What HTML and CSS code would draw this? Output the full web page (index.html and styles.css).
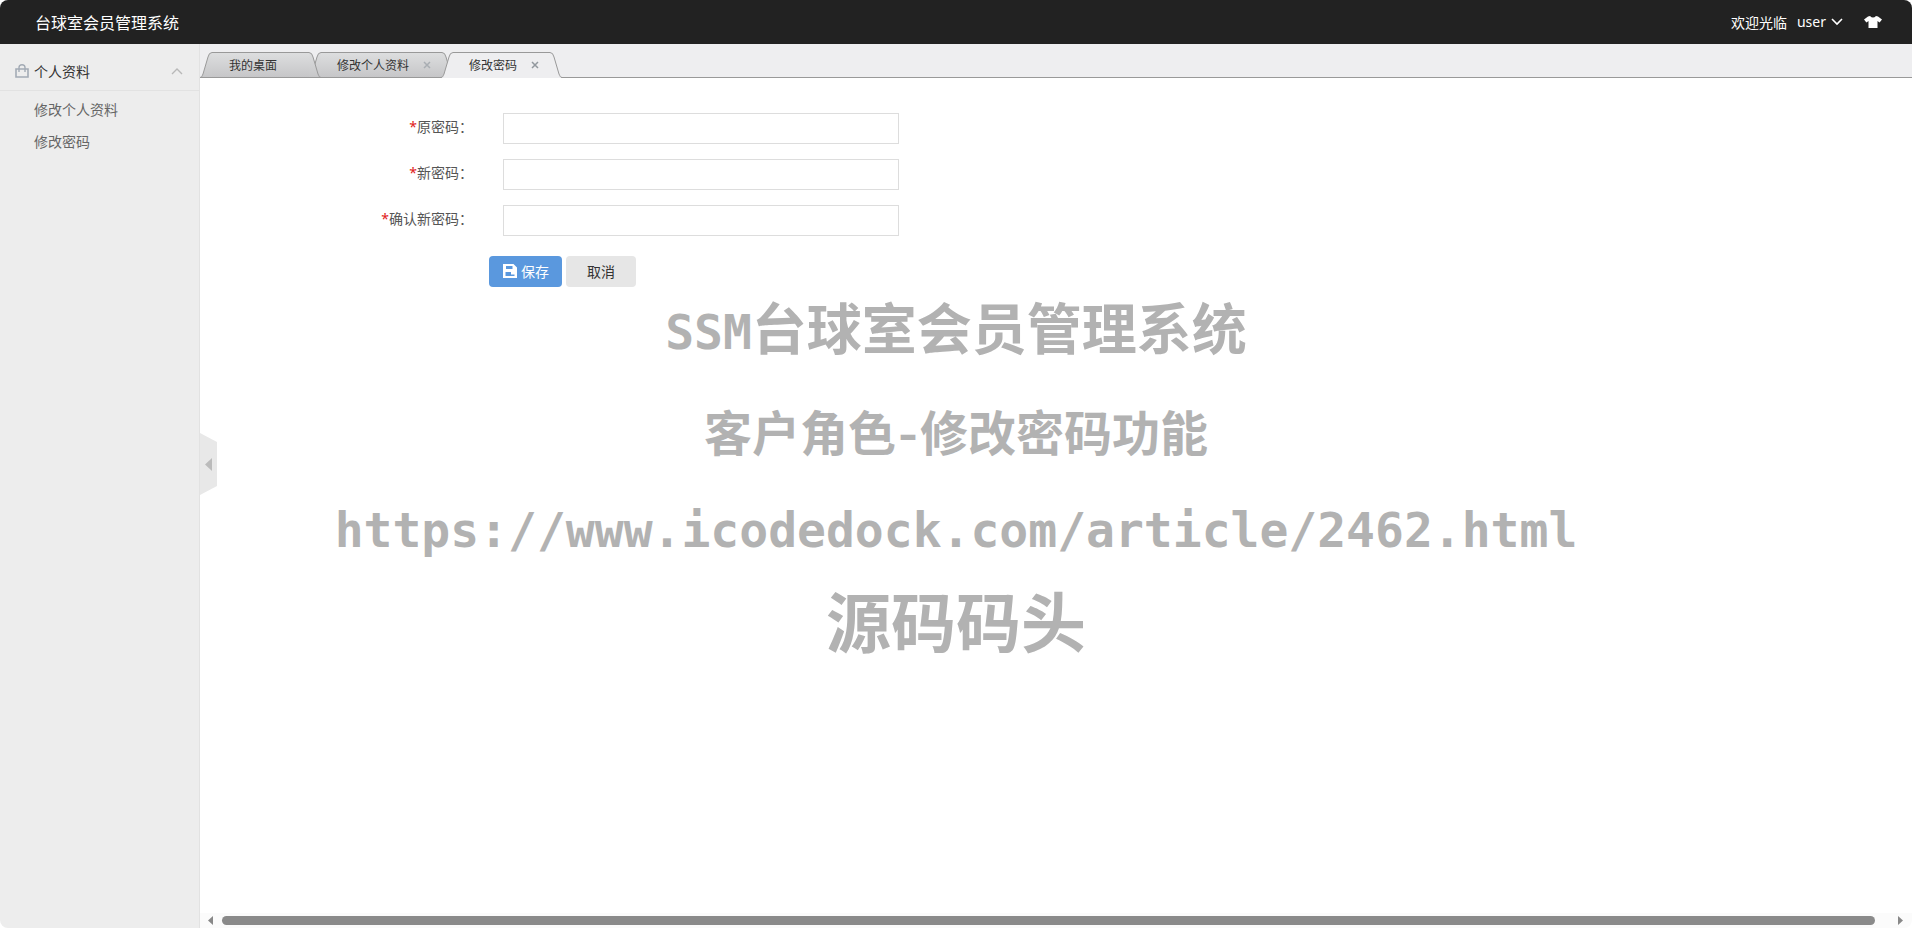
FILE: index.html
```
<!DOCTYPE html>
<html lang="zh-CN">
  <head>
    <meta charset="UTF-8" />
    <meta name="viewport" content="width=device-width, initial-scale=1.0" />
    <title>台球室会员管理系统</title>
    <link rel="stylesheet" href="styles.css" />
  </head>
  <body>
    <div class="window">
      <header class="navbar">
        <a class="logo" href="#">台球室会员管理系统</a>
        <div class="userbar">
          <span>欢迎光临</span>
          <button type="button" class="user">
            user
            <svg width="12" height="8" viewBox="0 0 12 8"><path d="M1 1l5 5 5-5" fill="none" stroke="#fff" stroke-width="1.6" /></svg>
          </button>
          <button type="button" class="skin" aria-label="换肤">
            <svg width="18" height="12" viewBox="0 0 18 12"><path d="M6 0Q9 3 12 0L14 .6 18 3.6 15.6 6.4 13.5 5V12H4.500V5L2.400 6.400 0 3.600 4 .600z" fill="#fff" /></svg>
          </button>
        </div>
      </header>

      <div class="body">
        <aside class="sidebar">
          <button type="button" class="menu-title">
            <svg width="14" height="14" viewBox="0 0 14 14" fill="none" stroke="#a3abb5">
              <path d="M1 5h12v8H1z" stroke-width="1.600" />
              <path d="M4 8V3.500Q4 .700 7 .700T10 3.500V8" stroke-width="1.400" />
            </svg>
            <span>个人资料</span>
            <svg class="arrow" width="12" height="7" viewBox="0 0 12 7"><path d="M1 6l5-5 5 5" fill="none" stroke="#b8b8b8" stroke-width="1.400" /></svg>
          </button>
          <nav class="menu">
            <a href="#">修改个人资料</a>
            <a href="#">修改密码</a>
          </nav>
        </aside>

        <main class="content">
          <button type="button" class="fold" aria-label="收起菜单">
            <svg width="17" height="62" viewBox="0 0 17 62">
              <path d="M0 0L17 9V53L0 62z" fill="#e8e8e8" />
              <path d="M12 25V38L5 31.500z" fill="#bbb" />
            </svg>
          </button>

          <div class="tabs">
            <div class="tab tab-first">
              <svg class="cap" viewBox="0 0 12 26">
                <defs>
                  <linearGradient id="tabFill" gradientUnits="userSpaceOnUse" x1="0" y1="0" x2="0" y2="26">
                    <stop offset="0" stop-color="#dddedf" />
                    <stop offset="1" stop-color="#c6c6c8" />
                  </linearGradient>
                </defs>
                <path class="fill" d="M0 26C2 25 2 24 3 22L8 5Q9 .5 12 .5V26z" /><path class="edge" d="M12 25.500H0C2 25 2 24 3 22L8 5Q9 .5 12 .5" />
              </svg>
              <div class="mid"><a href="#">我的桌面</a></div>
              <svg class="cap" viewBox="0 0 12 26"><path class="fill" d="M12 26C10 25 10 24 9 22L4 5Q3 .5 0 .5V26z" /><path class="edge" d="M0 25.500H12C10 25 10 24 9 22L4 5Q3 .5 0 .5" /></svg>
            </div>
            <div class="tab">
              <svg class="cap" viewBox="0 0 12 26"><path class="fill" d="M0 26C2 25 2 24 3 22L8 5Q9 .5 12 .5V26z" /><path class="edge" d="M12 25.500H0C2 25 2 24 3 22L8 5Q9 .5 12 .5" /></svg>
              <div class="mid">
                <a href="#">修改个人资料</a>
                <button type="button" class="close" aria-label="关闭"><svg width="8" height="8" viewBox="0 0 8 8"><path d="M1 1l6 6M7 1L1 7" /></svg></button>
              </div>
              <svg class="cap" viewBox="0 0 12 26"><path class="fill" d="M12 26C10 25 10 24 9 22L4 5Q3 .5 0 .5V26z" /><path class="edge" d="M0 25.500H12C10 25 10 24 9 22L4 5Q3 .5 0 .5" /></svg>
            </div>
            <div class="tab active">
              <svg class="cap" viewBox="0 0 12 26"><path class="fill" d="M0 26C2 25 2 24 3 22L8 5Q9 .5 12 .5V26z" /><path class="edge" d="M0 25.500C2 25 2 24 3 22L8 5Q9 .5 12 .5" /></svg>
              <div class="mid">
                <a href="#">修改密码</a>
                <button type="button" class="close" aria-label="关闭"><svg width="8" height="8" viewBox="0 0 8 8"><path d="M1 1l6 6M7 1L1 7" /></svg></button>
              </div>
              <svg class="cap" viewBox="0 0 12 26"><path class="fill" d="M12 26C10 25 10 24 9 22L4 5Q3 .5 0 .5V26z" /><path class="edge" d="M12 25.500C10 25 10 24 9 22L4 5Q3 .5 0 .5" /></svg>
            </div>
          </div>

          <form class="form" action="#">
            <div class="row">
              <label for="oldPwd"><span class="red">*</span>原密码：</label>
              <div class="field"><input type="password" id="oldPwd" name="oldPwd" /></div>
            </div>
            <div class="row">
              <label for="newPwd"><span class="red">*</span>新密码：</label>
              <div class="field"><input type="password" id="newPwd" name="newPwd" /></div>
            </div>
            <div class="row">
              <label for="newPwd2"><span class="red">*</span>确认新密码：</label>
              <div class="field"><input type="password" id="newPwd2" name="newPwd2" /></div>
            </div>
            <div class="row">
              <div class="buttons">
                <button type="submit" class="btn btn-primary">
                  <svg width="14" height="14" viewBox="0 0 14 14"><path fill="#fff" fill-rule="evenodd" d="M0 0H10.500L14 3.500V14H0zM3 2V5H9.500V2zM2.500 8V12H11.500V10.500H8V8z" /></svg>
                  保存
                </button>
                <button type="reset" class="btn">取消</button>
              </div>
            </div>
          </form>

          <!-- bottom scroll bar -->
          <div class="scrollbar">
            <svg width="5" height="9" viewBox="0 0 5 9"><path d="M5 0V9L0 4.500z" fill="#888" /></svg>
            <div class="thumb"></div>
            <svg width="5" height="9" viewBox="0 0 5 9"><path d="M0 0V9L5 4.500z" fill="#888" /></svg>
          </div>
        </main>
      </div>

      <div class="watermark">
        <p class="mark-title"><span class="latin">SSM</span>台球室会员管理系统</p>
        <p class="mark-sub">客户角色-修改密码功能</p>
        <p class="mark-url latin">https://www.icodedock.com/article/2462.html</p>
        <p class="mark-name">源码码头</p>
      </div>
    </div>
  </body>
</html>
```

FILE: styles.css
```
* {
  box-sizing: border-box;
}

body {
  margin: 0;
  background: #fff;
  font-family: "Noto Sans", "Noto Sans CJK SC", sans-serif;
  font-size: 14px;
  color: #333;
}

a {
  color: inherit;
  text-decoration: none;
}

button {
  padding: 0;
  border: 0;
  background: none;
  font: inherit;
  color: inherit;
  cursor: pointer;
}

svg {
  display: block;
  flex: none;
}

.window {
  position: relative;
  display: flex;
  flex-direction: column;
  min-height: 100vh;
  border-radius: 8px;
  overflow: hidden;
}

/* top bar */
.navbar {
  display: flex;
  align-items: center;
  justify-content: space-between;
  height: 44px;
  padding: 0 30px 1px 35px;
  background: #222;
  color: #fff;
}

.logo {
  font-size: 16px;
}

.userbar {
  display: flex;
  align-items: center;
}

.user {
  display: flex;
  align-items: center;
  gap: 5px;
  margin: 0 21px 0 10px;
}

.body {
  display: flex;
  flex: 1;
}

/* left menu */
.sidebar {
  flex: none;
  width: 200px;
  background: #ededed;
  border-right: 1px solid #e2e2e2;
}

.menu-title {
  display: flex;
  align-items: center;
  gap: 5px;
  width: 100%;
  height: 47px;
  padding: 8px 16px 0 15px;
  border-bottom: 1px solid #e2e2e2;
}

.menu-title .arrow {
  margin-left: auto;
}

.menu {
  display: flex;
  flex-direction: column;
  padding-top: 3px;
  color: #666;
}

.menu a {
  padding-left: 34px;
  line-height: 32px;
}

/* content */
.content {
  position: relative;
  display: flex;
  flex: 1;
  flex-direction: column;
  min-width: 0;
}

.fold {
  position: absolute;
  left: 0;
  top: 389px;
}

.tabs {
  display: flex;
  align-items: flex-end;
  height: 34px;
  background: #eeeef0;
  box-shadow: inset 0 -1px #999;
}

.tab {
  display: flex;
  height: 26px;
  margin-left: -12px;
  font-size: 12px;
}

.tab-first {
  position: relative;
  z-index: 1;
  margin-left: 0;
}

.tab.active {
  position: relative;
  z-index: 2;
  margin-left: -13px;
}

.cap {
  width: 12px;
  height: 26px;
}

.cap .fill {
  fill: url(#tabFill);
}

.cap .edge {
  fill: none;
  stroke: #999;
}

.mid {
  display: flex;
  align-items: center;
  gap: 14px;
  padding: 0 11px 0 16px;
  border-top: 1px solid #999;
  border-bottom: 1px solid #999;
  background: linear-gradient(#dddedf, #c6c6c8);
}

.tab-first .mid {
  padding: 0 32px 0 17px;
}

.active .mid {
  border-bottom-color: #eeeef0;
  background: #eeeef0;
}

.active .fill {
  fill: #eeeef0;
}

.close path {
  fill: none;
  stroke: #a9aeb3;
  stroke-width: 1.5;
}

.active .close path {
  stroke: #92989e;
}

/* password form */
.form {
  flex: 1;
  padding-top: 35px;
}

.row {
  display: grid;
  grid-template-columns: 16% 25%;
  margin-bottom: 15px;
}

.row label {
  padding: 3px 1px 0 0;
  text-align: right;
  line-height: 21px;
  color: #555;
}

.red {
  color: #e02020;
}

.field {
  padding: 0 3px 0 29px;
}

.field input {
  display: block;
  width: 100%;
  height: 31px;
  padding: 4px;
  border: 1px solid #ddd;
  font: inherit;
}

.buttons {
  display: flex;
  grid-column: 2;
  gap: 4px;
  padding: 5px 0 0 15px;
}

.btn {
  display: flex;
  align-items: center;
  gap: 4px;
  height: 31px;
  padding: 0 21px 1px;
  border-radius: 4px;
  background: #e6e6e6;
}

.btn-primary {
  padding: 0 13px 1px 14px;
  background: #5a98de;
  color: #fff;
}

.scrollbar {
  display: flex;
  align-items: center;
  gap: 9px;
  height: 15px;
  padding: 0 9px 0 8px;
  background: #fbfbfb;
}

.thumb {
  flex: 1;
  height: 9px;
  margin-right: 14px;
  border-radius: 5px;
  background: #8a8a8a;
}

/* page watermark */
.watermark {
  position: absolute;
  top: 285px;
  left: 0;
  width: 100%;
  font-family: "Noto Sans CJK SC", sans-serif;
  font-feature-settings: "hwid";
  font-weight: 700;
  text-align: center;
  white-space: nowrap;
  color: #b2b2b2;
  pointer-events: none;
}

.watermark p {
  margin: 0;
  line-height: 80px;
}

.watermark .latin {
  font-family: "DejaVu Sans Mono", monospace;
  font-size: 48px;
}

.mark-title {
  font-size: 55px;
}

.mark-sub {
  padding-top: 18px;
  font-size: 48px;
}

.mark-url {
  padding-top: 20px;
}

.mark-name {
  padding-top: 9px;
  font-size: 65px;
}
```
